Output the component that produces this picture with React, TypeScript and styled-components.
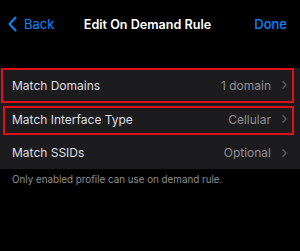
import React from "react";
import styled, { createGlobalStyle } from "styled-components";

const GlobalStyle = createGlobalStyle`
    html, body {
        margin: 0;
        padding: 0;
        background: #000;
    }
    body {
        font-family: "Inter", "Noto Sans", sans-serif;
        -webkit-font-smoothing: antialiased;
    }
`;

const Screen = styled.div`
    width: 300px;
    height: 251px;
    background: #000;
    display: flex;
    flex-direction: column;
    overflow: hidden;
`;

const NavBar = styled.div`
    height: 48px;
    display: grid;
    grid-template-columns: 1fr auto 1fr;
    align-items: center;
    padding: 0 13px 0 8px;
`;

const NavButton = styled.button<{ align: "left" | "right" }>`
    background: none;
    border: none;
    padding: 0;
    color: #0a84ff;
    font-family: inherit;
    font-size: 13px;
    display: flex;
    align-items: center;
    gap: 7px;
    justify-self: ${(props) => (props.align === "left" ? "start" : "end")};
    font-weight: ${(props) => (props.align === "right" ? 500 : 400)};
`;

const Title = styled.div`
    color: #fff;
    font-size: 12.6px;
    font-weight: 600;
`;

const Group = styled.div`
    margin-top: 20px;
    background: #1c1c1e;
    display: flex;
    flex-direction: column;
`;

const Row = styled.div`
    position: relative;
    height: 34px;
    display: flex;
    align-items: center;
    padding: 0 13px 0 12px;
    gap: 11px;

    &:last-child {
        height: 33px;
    }
`;

const RowLabel = styled.div`
    color: #dedee3;
    font-size: 12px;
    flex: 1;
`;

const RowValue = styled.div`
    color: #8e8e93;
    font-size: 12px;
`;

const Highlight = styled.div<{ top: number; left: number; bottom: number }>`
    position: absolute;
    top: ${(props) => props.top}px;
    bottom: ${(props) => props.bottom}px;
    left: ${(props) => props.left}px;
    right: 6px;
    border: 2px solid #e0101a;
    pointer-events: none;
`;

const Footer = styled.div`
    color: #8e8e93;
    font-size: 9.8px;
    padding: 5px 12px;
`;

const Chevron = () => (
    <svg width="5" height="8" viewBox="0 0 5 8" fill="none">
        <path d="M1 0.8l3 3.2-3 3.2" stroke="#5c5c60" strokeWidth="1.3" strokeLinecap="round" strokeLinejoin="round" />
    </svg>
);

const BackChevron = () => (
    <svg width="9" height="16" viewBox="0 0 9 16" fill="none">
        <path d="M7.5 1.5L1.5 8l6 6.5" stroke="#0a84ff" strokeWidth="2" strokeLinecap="round" strokeLinejoin="round" />
    </svg>
);

const rows = [
    { label: "Match Domains", value: "1 domain", highlight: { top: 0, left: 1, bottom: -1 } },
    { label: "Match Interface Type", value: "Cellular", highlight: { top: 4, left: 3, bottom: 1 } },
    { label: "Match SSIDs", value: "Optional" },
];

export default function App() {
    return (
        <Screen>
            <GlobalStyle />
            <NavBar>
                <NavButton align="left">
                    <BackChevron />
                    Back
                </NavButton>
                <Title>Edit On Demand Rule</Title>
                <NavButton align="right">Done</NavButton>
            </NavBar>
            <Group>
                {rows.map((row) => (
                    <Row key={row.label}>
                        <RowLabel>{row.label}</RowLabel>
                        <RowValue>{row.value}</RowValue>
                        <Chevron />
                        {row.highlight && <Highlight {...row.highlight} />}
                    </Row>
                ))}
            </Group>
            <Footer>Only enabled profile can use on demand rule.</Footer>
        </Screen>
    );
}
